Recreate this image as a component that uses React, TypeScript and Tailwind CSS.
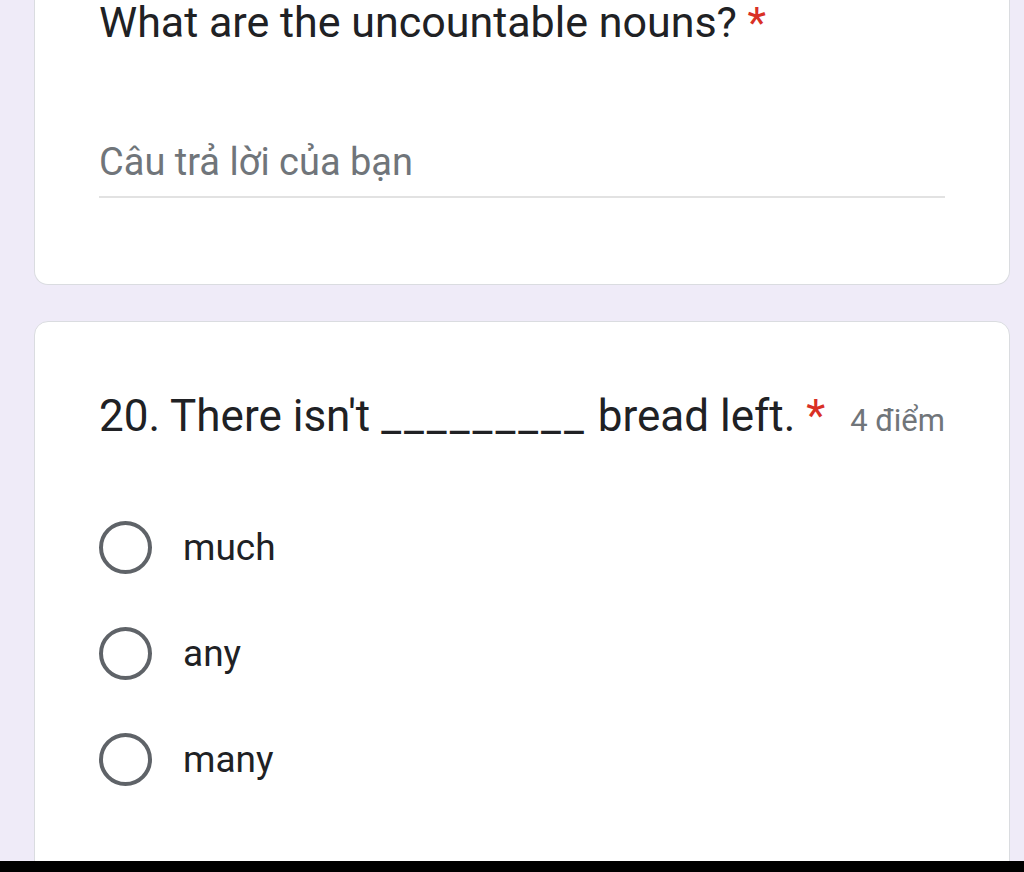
import React from "react";

function Radio({ label }: { label: string }) {
  return (
    <div className="flex items-center h-[106px]">
      <div className="w-[53px] h-[53px] rounded-full border-[4px] border-[#5f6368] shrink-0" />
      <span className="ml-[31px] text-[37px] text-[#202124] leading-none">{label}</span>
    </div>
  );
}

export default function App() {
  return (
    <div
      className="w-[1024px] h-[872px] overflow-hidden bg-[#efebf8] flex flex-col"
      style={{ fontFamily: "Roboto, 'Noto Sans', sans-serif" }}
    >
      <div className="flex-1 overflow-hidden pl-[34px] pr-[14px]">
        <div className="bg-white rounded-b-[14px] border-x border-b border-[#dadce0] px-16 h-[285px]">
          <div className="text-[43px] leading-[44px] text-[#202124]">
            What are the uncountable nouns? <span className="text-[#d93025]">*</span>
          </div>
          <div className="mt-[96px] text-[38px] leading-[44px] text-[#70757a]">Câu trả lời của bạn</div>
          <div className="mt-[12px] h-[2px] bg-[#e2e2e2]" />
        </div>
        <div className="mt-[36px] bg-white rounded-[14px] border border-[#dadce0] px-16 pt-[66px] h-[600px]">
          <div className="flex items-baseline justify-between">
            <div className="text-[44px] leading-[56px] text-[#202124]">
              20. There isn't <span className="tracking-[3px]">_________</span> bread left. <span className="text-[#d93025]">*</span>
            </div>
            <div className="text-[31px] text-[#70757a]">4 điểm</div>
          </div>
          <div className="mt-[50px]">
            <Radio label="much" />
            <Radio label="any" />
            <Radio label="many" />
          </div>
        </div>
      </div>
      <div className="h-[11px] bg-black shrink-0" />
    </div>
  );
}
